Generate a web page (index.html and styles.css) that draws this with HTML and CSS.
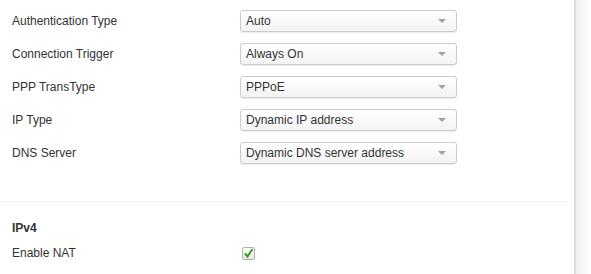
FILE: index.html
```html
<!DOCTYPE html>
<html lang="en">
<head>
    <meta charset="UTF-8">
    <title>WAN Settings</title>
    <link rel="stylesheet" href="styles.css">
</head>
<body>
    <div class="page">
        <div class="panel">
            <div class="form-group">
                <div class="form-row">
                    <label class="form-label"></label>
                    <div class="select"><span></span><i class="caret"></i></div>
                </div>
                <div class="form-row">
                    <label class="form-label">Authentication Type</label>
                    <div class="select"><span>Auto</span><i class="caret"></i></div>
                </div>
                <div class="form-row">
                    <label class="form-label">Connection Trigger</label>
                    <div class="select"><span>Always On</span><i class="caret"></i></div>
                </div>
                <div class="form-row">
                    <label class="form-label">PPP TransType</label>
                    <div class="select"><span>PPPoE</span><i class="caret"></i></div>
                </div>
                <div class="form-row">
                    <label class="form-label">IP Type</label>
                    <div class="select"><span>Dynamic IP address</span><i class="caret"></i></div>
                </div>
                <div class="form-row">
                    <label class="form-label">DNS Server</label>
                    <div class="select"><span>Dynamic DNS server address</span><i class="caret"></i></div>
                </div>
            </div>

            <hr class="divider">

            <div class="section">
                <h4 class="section-title">IPv4</h4>
                <div class="check-row">
                    <label class="form-label">Enable NAT</label>
                    <span class="checkbox">
                        <svg width="11" height="11" viewBox="0 0 11 11">
                            <path d="M2 5.5 L4.5 8.5 L9.5 1" fill="none" stroke="#3d9a1e" stroke-width="2"/>
                        </svg>
                    </span>
                </div>
            </div>
        </div>
        <div class="edge"></div>
    </div>
</body>
</html>
```

FILE: styles.css
```css
:root {
    --text: #333333;
    --border: #cccccc;
    --line: #eeeeee;
}

body {
    margin: 0;
    font-family: Arial, "Liberation Sans", sans-serif;
    font-size: 12px;
    color: var(--text);
    background: #ffffff;
    overflow: hidden;
}

.page {
    display: flex;
    height: 274px;
}

.panel {
    width: 574px;
    flex: none;
}

.edge {
    width: 17px;
    border-left: 2px solid #dcdcdc;
    background: linear-gradient(to right, #f0f0f0, #ffffff);
}

.form-group {
    margin-top: -23px;
    padding-left: 12px;
    display: flex;
    flex-direction: column;
    gap: 11px;
}

.form-row {
    display: flex;
    align-items: center;
    height: 22px;
}

.form-label {
    width: 228px;
    flex: none;
}

.select {
    width: 200px;
    height: 20px;
    border: 1px solid var(--border);
    border-radius: 3px;
    background: linear-gradient(to bottom, #ffffff, #f3f3f3);
    box-shadow: 0 1px 1px rgba(0,0,0,0.08);
    display: flex;
    align-items: center;
    justify-content: space-between;
    padding: 0 10px 0 5px;
}

.caret {
    width: 0;
    height: 0;
    border-left: 4px solid transparent;
    border-right: 4px solid transparent;
    border-top: 4px solid #a0a0a0;
}

.divider {
    border: none;
    border-top: 1px solid var(--line);
    margin: 37px 6px 0 0;
}

.section {
    padding-left: 12px;
}

.section-title {
    margin: 19px 0 0;
    font-size: 12px;
    font-weight: bold;
    height: 15px;
    line-height: 15px;
}

.check-row {
    display: flex;
    align-items: center;
    margin-top: 9px;
    height: 16px;
}

.check-row .form-label {
    width: 230px;
}

.checkbox {
    width: 11px;
    height: 11px;
    border: 1px solid #b0b0b0;
    border-radius: 2px;
    background: linear-gradient(to bottom, #ffffff, #e8e8e8);
    display: flex;
    align-items: center;
    justify-content: center;
}
```
